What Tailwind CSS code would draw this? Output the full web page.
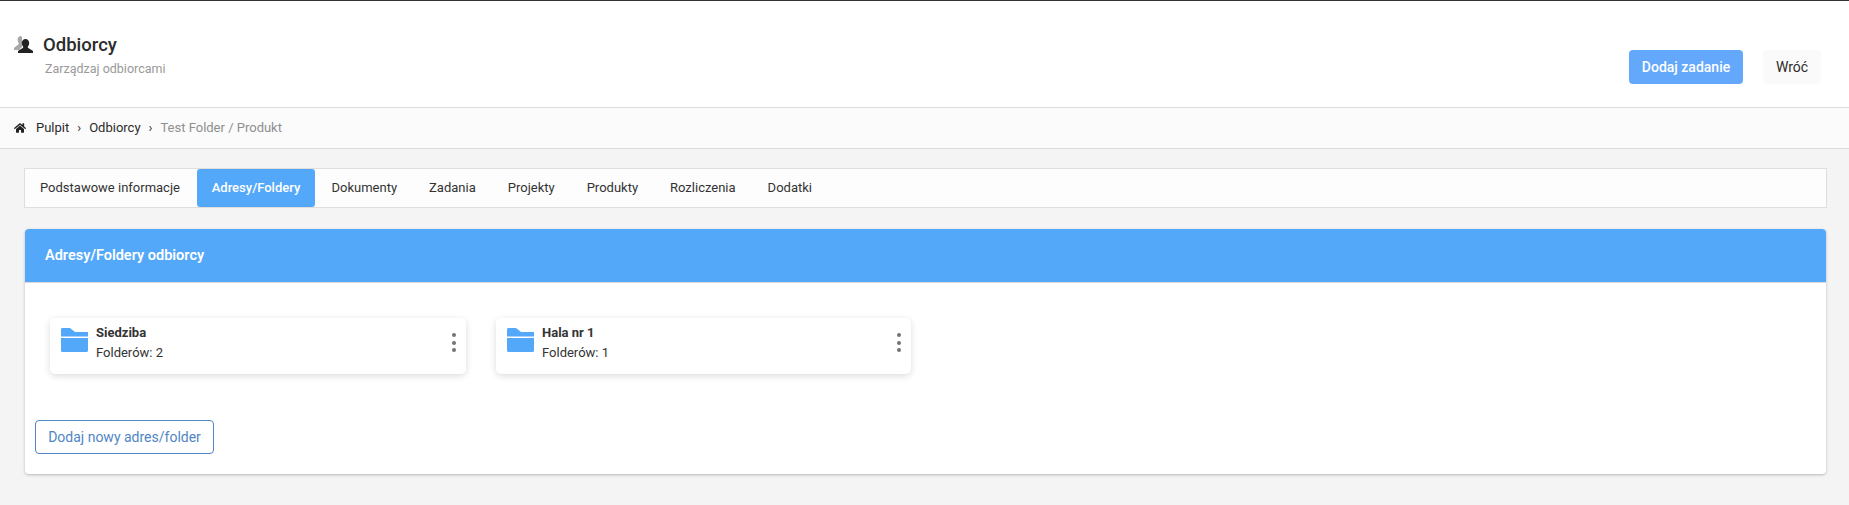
<!DOCTYPE html>
<html lang="pl">

<head>
    <meta charset="UTF-8">
    <title>Odbiorcy</title>
    <script src="https://cdn.jsdelivr.net/npm/@tailwindcss/browser@4"></script>
</head>

<body class="bg-[#f4f4f4] h-[505px] overflow-hidden font-['Roboto',sans-serif] text-[13px] text-[#2b2b2b]">
    <!-- Header -->
    <header class="h-[108px] bg-white border-t border-t-[#333] border-b border-b-[#dcdcdc] flex justify-between pl-[14px] pr-[28px]">
        <div class="flex items-start pt-[32px]">
            <svg class="w-[19px] h-[19px] mt-[3px]" viewBox="0 0 19 19">
                <path fill="#a8a8a8" d="M7 0C5 0 3.600 1.500 3.600 3.600c0 1.300.4 2.500 1 3.300.3.500.2 1.300-.3 1.600L.5 11.600c-.3.200-.5.600-.5 1V14h5l3-3V1z" />
                <path fill="#222" d="M11.500 3C9.300 3 7.800 4.700 7.800 7c0 1.500.6 2.800 1.300 3.600.3.400.2 1-.3 1.300L4.600 14.500c-.4.300-.6.600-.6 1V17h15v-1.500c0-.4-.2-.7-.6-1l-4.200-2.600c-.5-.3-.6-.9-.3-1.300.7-.8 1.300-2.100 1.300-3.600C15.200 4.700 13.700 3 11.500 3z" />
            </svg>
            <div class="ml-[10px]">
                <h1 class="text-[18.500px] leading-[24px] font-medium text-[#2b2b2b]">Odbiorcy</h1>
                <p class="mt-[3px] ml-[2px] text-[12.500px] leading-[18px] text-[#999]">Zarządzaj odbiorcami</p>
            </div>
        </div>
        <div class="flex items-start gap-[20px] pt-[49px]">
            <button class="h-[34px] w-[114px] rounded-[4px] bg-[#64a8fb] text-white text-[14px] font-medium">Dodaj zadanie</button>
            <button class="h-[34px] w-[58px] rounded-[4px] bg-[#fafafa] text-[#2b2b2b] text-[14px]">Wróć</button>
        </div>
    </header>

    <!-- Breadcrumb -->
    <nav class="h-[41px] bg-[#fbfbfb] border-b border-[#dcdcdc] flex items-center pl-[14px] text-[13px]">
        <svg class="w-[12px] h-[12px]" viewBox="0 0 576 512">
            <path fill="#222" d="M280 148 96 300v164c0 9 7 16 16 16l112-1c9 0 16-7 16-16v-95c0-9 7-16 16-16h64c9 0 16 7 16 16v95c0 9 7 16 16 16l112 1c9 0 16-7 16-16V300L296 148c-5-4-11-4-16 0zM572 251l-84-69V44c0-7-5-12-12-12h-56c-7 0-12 5-12 12v72l-89-74c-18-14-44-14-62 0L4 251c-5 4-6 12-2 17l26 31c4 5 12 6 17 2L280 107c5-4 11-4 16 0l235 194c5 4 13 3 17-2l26-31c4-5 3-13-2-17z" />
        </svg>
        <span class="ml-[10px]">Pulpit</span>
        <span class="mx-[8px] text-[13px]">›</span>
        <span>Odbiorcy</span>
        <span class="mx-[8px] text-[13px]">›</span>
        <span class="text-[#8f8f8f]">Test Folder / Produkt</span>
    </nav>

    <main class="pt-[19px] pl-[25px] pr-[23px]">
        <!-- Tabs -->
        <div class="h-[40px] -ml-px -mr-px bg-[#fdfdfd] border border-[#dedede] flex items-stretch text-[13px] text-[#333]">
            <a class="w-[172px] pl-[15px] flex items-center">Podstawowe informacje</a>
            <a class="w-[118px] flex items-center justify-center rounded-[3px] bg-[#54a8fa] text-white font-medium">Adresy/Foldery</a>
            <a class="pl-[16.500px] flex items-center">Dokumenty</a>
            <a class="pl-[32px] flex items-center">Zadania</a>
            <a class="pl-[32px] flex items-center">Projekty</a>
            <a class="pl-[32px] flex items-center">Produkty</a>
            <a class="pl-[32px] flex items-center">Rozliczenia</a>
            <a class="pl-[32px] flex items-center">Dodatki</a>
        </div>

        <!-- Panel -->
        <section class="mt-[21px] h-[245px] bg-white rounded-[4px] shadow-[0_1px_3px_rgba(0,0,0,0.25)] overflow-hidden">
            <div class="h-[54px] bg-[#54a8fa] border-b border-[#dcdcdc] flex items-center pl-[20px] text-white text-[14.500px] font-semibold">Adresy/Foldery odbiorcy</div>

            <div class="flex gap-[30px] pt-[35px] pl-[25px]">
                <div class="w-[416px] h-[56px] bg-white rounded-[5px] shadow-[0_2px_7px_rgba(0,0,0,0.14)] flex pl-[11px] pr-[9px] pt-[7px]">
                    <svg class="w-[27px] h-[24px] mt-[3px]" viewBox="0 0 27 24">
                        <path fill="#54a8fa" d="M0 1.500C0 .7.700 0 1.500 0H9l5 4h13v4.500H0z" />
                        <path fill="#54a8fa" d="M0 10h27v12.500c0 .8-.7 1.500-1.500 1.500h-24C.7 24 0 23.300 0 22.500z" />
                    </svg>
                    <div class="ml-[8px] flex-1">
                        <div class="text-[13px] leading-[16px] font-bold text-[#333]">Siedziba</div>
                        <div class="mt-[3px] text-[13px] leading-[18px] text-[#333]">Folderów: 2</div>
                    </div>
                    <div class="flex flex-col gap-[3.500px] pt-[8px] pr-[1px]">
                        <span class="w-[4px] h-[4px] rounded-full bg-[#77707a]"></span>
                        <span class="w-[4px] h-[4px] rounded-full bg-[#77707a]"></span>
                        <span class="w-[4px] h-[4px] rounded-full bg-[#77707a]"></span>
                    </div>
                </div>
                <div class="w-[415px] h-[56px] bg-white rounded-[5px] shadow-[0_2px_7px_rgba(0,0,0,0.14)] flex pl-[11px] pr-[9px] pt-[7px]">
                    <svg class="w-[27px] h-[24px] mt-[3px]" viewBox="0 0 27 24">
                        <path fill="#54a8fa" d="M0 1.500C0 .7.700 0 1.500 0H9l5 4h13v4.500H0z" />
                        <path fill="#54a8fa" d="M0 10h27v12.500c0 .8-.7 1.500-1.500 1.500h-24C.7 24 0 23.300 0 22.500z" />
                    </svg>
                    <div class="ml-[8px] flex-1">
                        <div class="text-[13px] leading-[16px] font-bold text-[#333]">Hala nr 1</div>
                        <div class="mt-[3px] text-[13px] leading-[18px] text-[#333]">Folderów: 1</div>
                    </div>
                    <div class="flex flex-col gap-[3.500px] pt-[8px] pr-[1px]">
                        <span class="w-[4px] h-[4px] rounded-full bg-[#77707a]"></span>
                        <span class="w-[4px] h-[4px] rounded-full bg-[#77707a]"></span>
                        <span class="w-[4px] h-[4px] rounded-full bg-[#77707a]"></span>
                    </div>
                </div>
            </div>

            <button class="mt-[46px] ml-[10px] w-[179px] h-[34px] rounded-[4px] border border-[#4f86c6] text-[#4f86c6] text-[14px]">Dodaj nowy adres/folder</button>
        </section>
    </main>
</body>

</html>
